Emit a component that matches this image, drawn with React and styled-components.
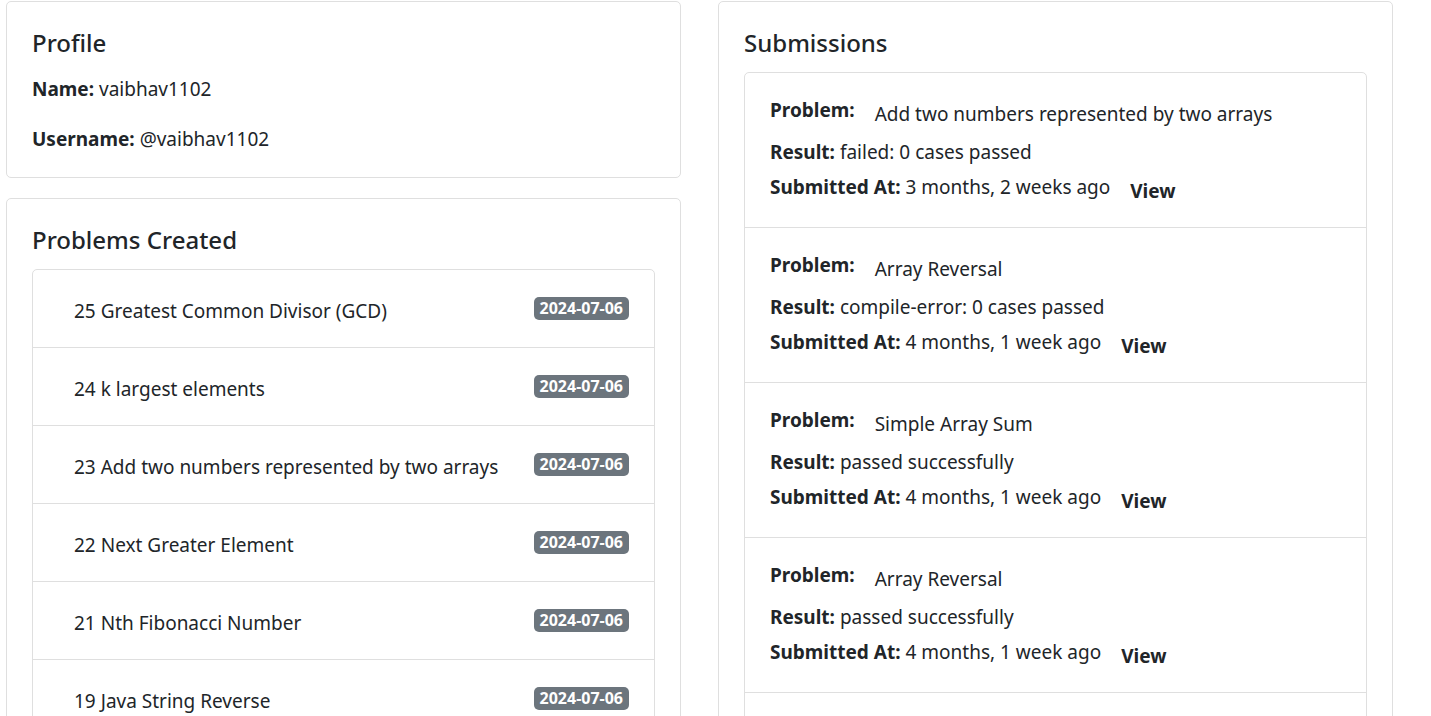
import React from "react";
import styled, { createGlobalStyle } from "styled-components";

const GlobalStyle = createGlobalStyle`
  *, *::before, *::after { box-sizing: border-box; }
  body {
    margin: 0;
    background: #fff;
    color: #212529;
    font-family: "Segoe UI", "Noto Sans", "Liberation Sans", sans-serif;
    font-size: 19px;
    line-height: 30px;
  }
`;

const Page = styled.main`
  display: grid;
  grid-template-columns: 1fr 1fr;
  align-items: start;
  gap: 37px;
  padding: 1px 38px 20px 6px;
`;

const Column = styled.div`
  display: flex;
  flex-direction: column;
  gap: 20px;
  min-width: 0;
`;

const Card = styled.section`
  padding: 25px;
  border: 1px solid #dfdfdf;
  border-radius: 5px;
`;

const ProfileCard = styled(Card)`
  padding-bottom: 23px;
`;

const CardTitle = styled.h2`
  margin: 0 0 13px;
  font-size: 24px;
  line-height: 32px;
  font-weight: 500;
`;

const Fields = styled.div`
  display: flex;
  flex-direction: column;
  gap: 20px;
  padding-top: 2px;
`;

const Field = styled.p`
  margin: 0;
`;

const Label = styled.strong`
  font-weight: 700;
`;

const List = styled.ul`
  margin: 0;
  padding: 0;
  list-style: none;
  border: 1px solid #dfdfdf;
  border-radius: 5px;
`;

const ListItem = styled.li`
  padding: 0 25px;
  & + & { border-top: 1px solid #dfdfdf; }
`;

const ProblemItem = styled(ListItem)`
  display: flex;
  justify-content: space-between;
  align-items: center;
  padding-top: 20px;
  padding-bottom: 21px;
`;

const TextLink = styled.a`
  padding-top: 4px;
  color: inherit;
  text-decoration: none;
  font-weight: ${(p) => (p.$bold ? 700 : 400)};
`;

const ProblemLink = styled(TextLink)`
  padding-top: 6px;
  padding-left: 16px;
`;

const Badge = styled.span`
  padding: 4px 6px;
  border-radius: 5px;
  background: #6c757d;
  color: #fff;
  font-size: 16px;
  line-height: 15px;
  font-weight: 700;
`;

const SubmissionItem = styled(ListItem)`
  padding-top: 22px;
  padding-bottom: 21px;
`;

const Line = styled.div`
  display: flex;
  align-items: flex-start;
  gap: 20px;
`;

const Result = styled.div`
  margin: 8px 0 5px;
`;

const problems = [
  [25, "Greatest Common Divisor (GCD)"],
  [24, "k largest elements"],
  [23, "Add two numbers represented by two arrays"],
  [22, "Next Greater Element"],
  [21, "Nth Fibonacci Number"],
  [19, "Java String Reverse"],
];

const submissions = [
  ["Add two numbers represented by two arrays", "failed: 0 cases passed", "3 months, 2 weeks ago"],
  ["Array Reversal", "compile-error: 0 cases passed", "4 months, 1 week ago"],
  ["Simple Array Sum", "passed successfully", "4 months, 1 week ago"],
  ["Array Reversal", "passed successfully", "4 months, 1 week ago"],
  ["Array Reversal", "passed successfully", "4 months, 1 week ago"],
];

export default function App() {
  return (
    <>
      <GlobalStyle />
      <Page>
        <Column>
          <ProfileCard>
            <CardTitle>Profile</CardTitle>
            <Fields>
              <Field><Label>Name:</Label> vaibhav1102</Field>
              <Field><Label>Username:</Label> @vaibhav1102</Field>
            </Fields>
          </ProfileCard>
          <Card>
            <CardTitle>Problems Created</CardTitle>
            <List>
              {problems.map(([id, title]) => (
                <ProblemItem key={id}>
                  <ProblemLink href={`#problem-${id}`}>{id} {title}</ProblemLink>
                  <Badge>2024-07-06</Badge>
                </ProblemItem>
              ))}
            </List>
          </Card>
        </Column>
        <Column>
          <Card>
            <CardTitle>Submissions</CardTitle>
            <List>
              {submissions.map(([title, result, when], i) => (
                <SubmissionItem key={i}>
                  <Line>
                    <Label>Problem:</Label>
                    <TextLink href="#problem">{title}</TextLink>
                  </Line>
                  <Result><Label>Result:</Label> {result}</Result>
                  <Line>
                    <span><Label>Submitted At:</Label> {when}</span>
                    <TextLink $bold href="#submission">View</TextLink>
                  </Line>
                </SubmissionItem>
              ))}
            </List>
          </Card>
        </Column>
      </Page>
    </>
  );
}
